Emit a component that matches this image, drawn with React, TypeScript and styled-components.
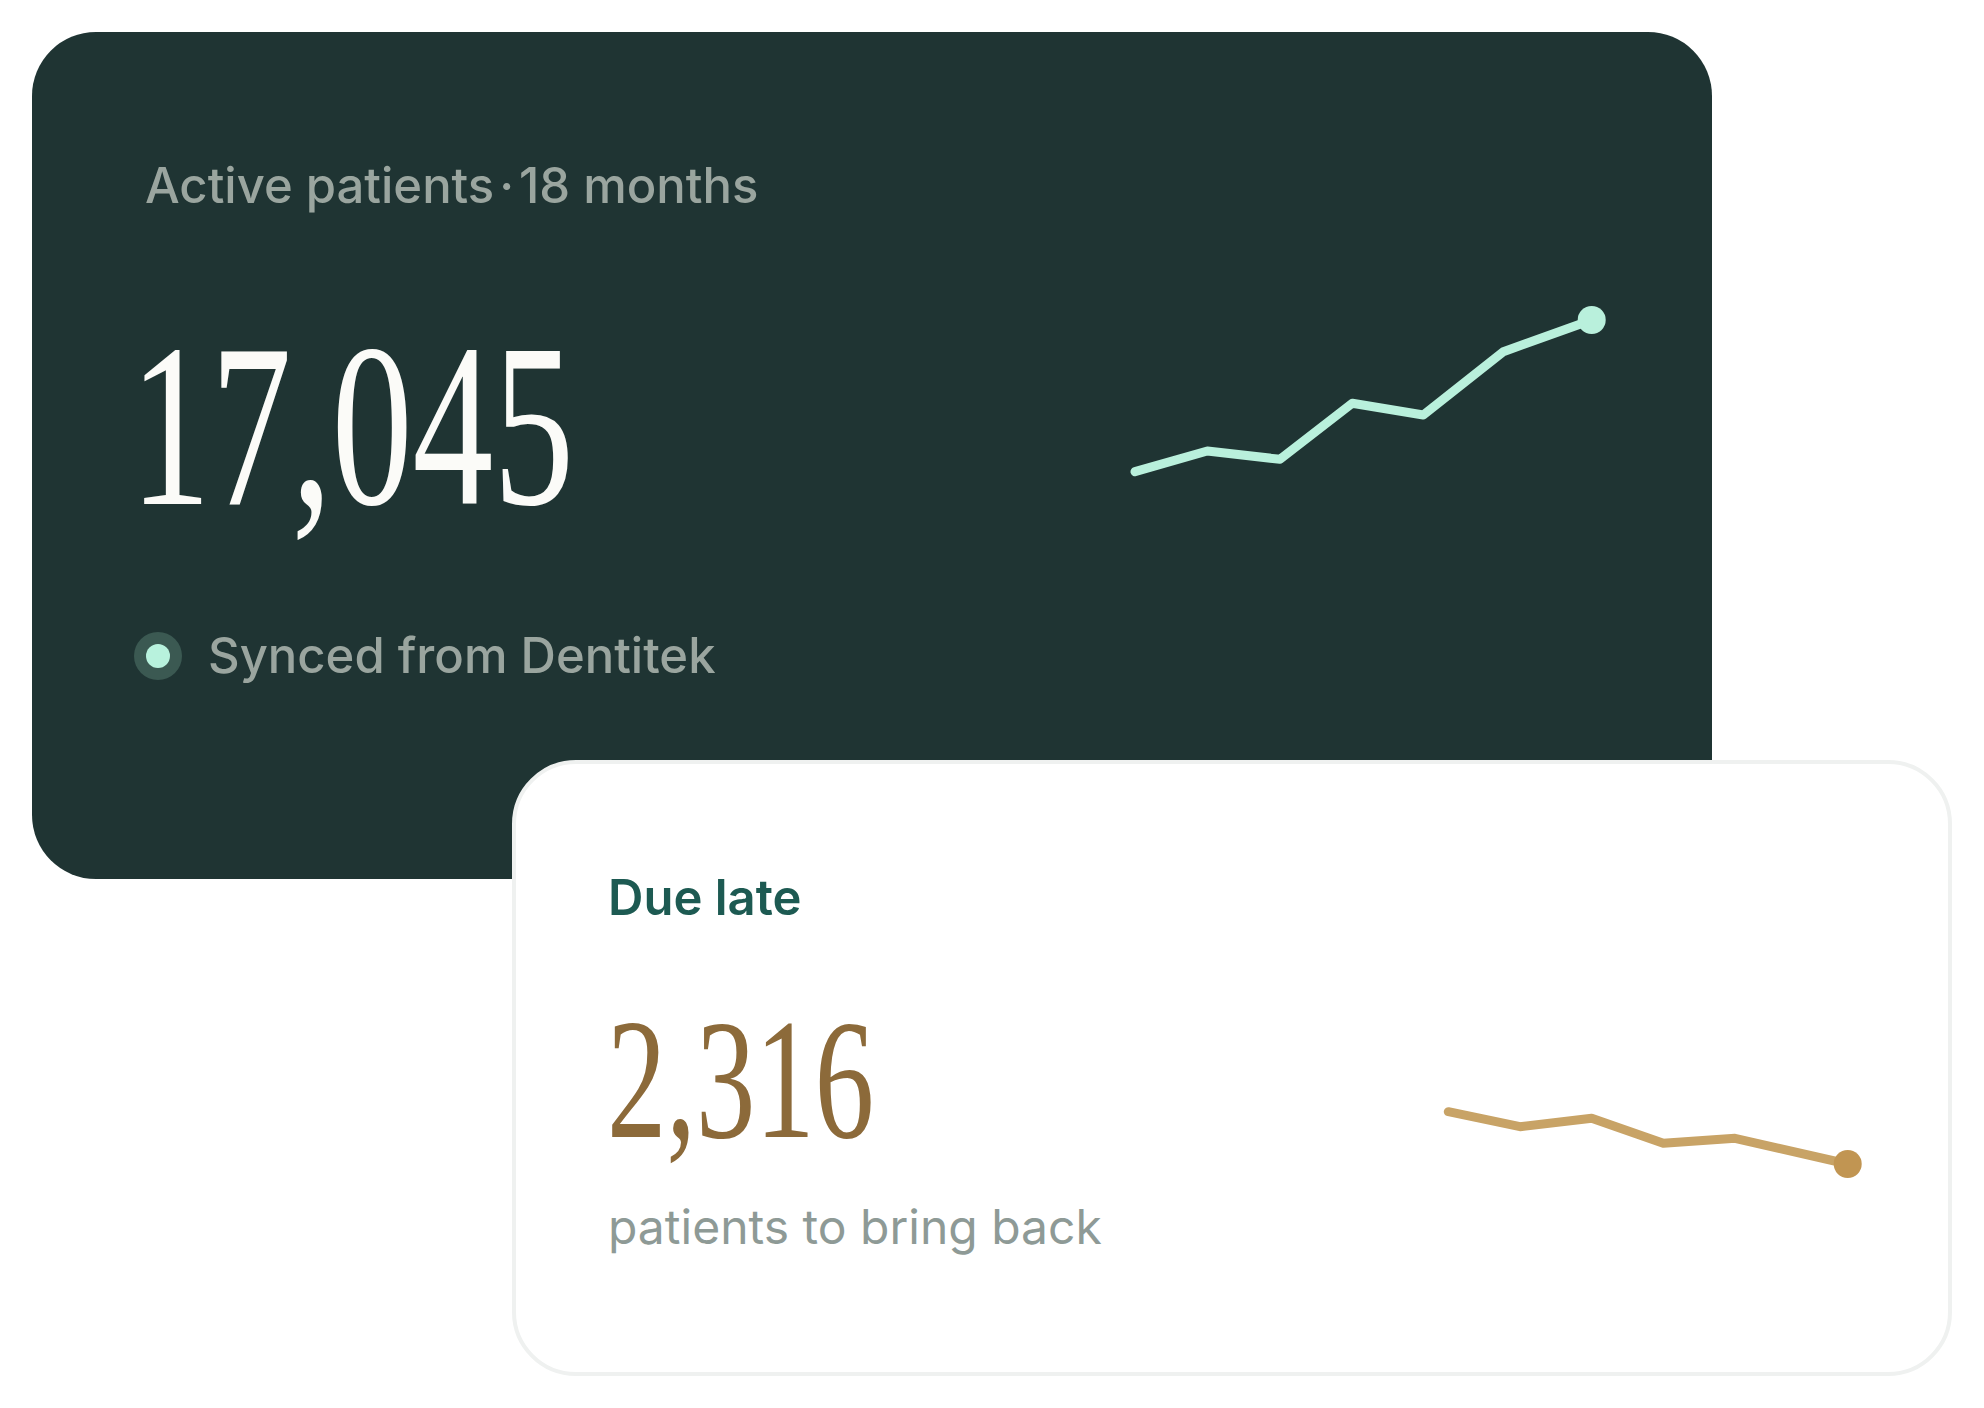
import React from "react";
import styled, { createGlobalStyle } from "styled-components";

const GlobalStyle = createGlobalStyle`
  html, body {
    margin: 0;
    padding: 0;
    background: #ffffff;
  }
  body {
    font-family: Inter, "Noto Sans", "Liberation Sans", sans-serif;
    -webkit-font-smoothing: antialiased;
  }
`;

const Stage = styled.div`
  padding: 32px;
  display: flex;
  flex-direction: column;
  align-items: flex-start;
`;

const DarkCard = styled.section`
  box-sizing: border-box;
  width: 1680px;
  height: 847px;
  padding: 125px 92px 0 113px;
  border-radius: 64px;
  background: #1f3433;
  display: grid;
  grid-template-columns: 1fr auto;
  align-items: start;
`;

const LightCard = styled.section`
  position: relative;
  box-sizing: border-box;
  width: 1440px;
  height: 616px;
  margin: -119px 0 0 480px;
  padding: 105px 78px 0 92px;
  border: 4px solid #eff1f0;
  border-radius: 64px;
  background: #ffffff;
  display: grid;
  grid-template-columns: 1fr auto;
  align-items: start;
`;

const Stack = styled.div`
  display: flex;
  flex-direction: column;
  align-items: flex-start;
`;

const Caption = styled.div<{ $tone: string; $weight?: number; $gap?: number; $size?: number }>`
  margin-top: ${(p) => p.$gap ?? 0}px;
  font-size: ${(p) => p.$size ?? 49}px;
  line-height: 1.2;
  font-weight: ${(p) => p.$weight ?? 500};
  color: ${(p) => p.$tone};
  letter-spacing: 0;
  white-space: nowrap;
`;

const Sep = styled.span`
  margin: 0 0.1em;
`;

const BigFigure = styled.div<{ $size: number; $tone: string; $gap: number; $shift: number }>`
  display: inline-block;
  margin-top: ${(p) => p.$gap}px;
  margin-left: ${(p) => p.$shift}px;
  font-family: "Liberation Serif", "DejaVu Serif", serif;
  font-size: ${(p) => p.$size}px;
  line-height: 1;
  font-weight: 400;
  letter-spacing: 0;
  color: ${(p) => p.$tone};
  transform: scaleX(0.69);
  transform-origin: left center;
  white-space: nowrap;
`;

const SyncRow = styled.div`
  margin-top: 85px;
  margin-left: 1px;
  display: flex;
  align-items: center;
  gap: 38px;
`;

const SyncDot = styled.span`
  width: 24px;
  height: 24px;
  border-radius: 50%;
  background: #b8f2dd;
  box-shadow: 0 0 0 12px #3b5952;
  flex: none;
`;

const Chart = styled.svg<{ $top: number }>`
  display: block;
  margin-top: ${(p) => p.$top}px;
  overflow: visible;
`;

type Pt = [number, number];

function Sparkline({
  points,
  width,
  height,
  top,
  line,
  dot,
}: {
  points: Pt[];
  width: number;
  height: number;
  top: number;
  line: string;
  dot: string;
}) {
  const last = points[points.length - 1];
  return (
    <Chart $top={top} width={width} height={height} viewBox={`0 0 ${width} ${height}`}>
      <polyline
        points={points.map((p) => p.join(",")).join(" ")}
        fill="none"
        stroke={line}
        strokeWidth={9}
        strokeLinecap="round"
        strokeLinejoin="round"
      />
      <circle cx={last[0]} cy={last[1]} r={14} fill={dot} />
    </Chart>
  );
}

const activeTrend: Pt[] = [
  [15, 171.7],
  [87.3, 151],
  [160, 159.3],
  [232.3, 103.3],
  [303.3, 115],
  [383.3, 51.7],
  [471.7, 20],
];

const lateTrend: Pt[] = [
  [18.3, 21.7],
  [90, 36.7],
  [161.7, 28.3],
  [233.3, 53.3],
  [305, 48.3],
  [417.7, 74],
];

export default function App() {
  return (
    <>
      <GlobalStyle />
      <Stage>
        <DarkCard>
          <Stack>
            <Caption $tone="#9aa59f">
              Active patients<Sep>·</Sep>18 months
            </Caption>
            <BigFigure $size={234} $tone="#fbfbf8" $gap={92} $shift={-15}>
              17,045
            </BigFigure>
            <SyncRow>
              <SyncDot />
              <Caption $tone="#9aa59f">Synced from Dentitek</Caption>
            </SyncRow>
          </Stack>
          <Sparkline
            points={activeTrend}
            width={500}
            height={190}
            top={143}
            line="#b9f0dc"
            dot="#b9f0dc"
          />
        </DarkCard>
        <LightCard>
          <Stack>
            <Caption $tone="#1d5a52" $weight={600}>
              Due late
            </Caption>
            <BigFigure $size={172} $tone="#8c6a3a" $gap={65} $shift={-1}>
              2,316
            </BigFigure>
            <Caption $tone="#8e9a96" $weight={400} $gap={33} $size={48}>
              patients to bring back
            </Caption>
          </Stack>
          <Sparkline
            points={lateTrend}
            width={440}
            height={100}
            top={221}
            line="#c8a366"
            dot="#c19552"
          />
        </LightCard>
      </Stage>
    </>
  );
}
